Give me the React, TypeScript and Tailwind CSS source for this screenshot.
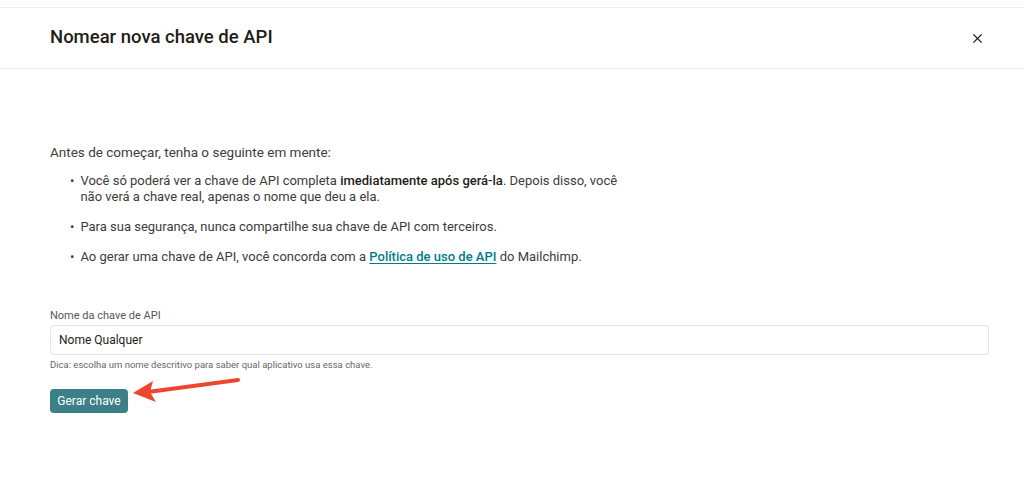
import React, { useState } from 'react';

const bullets = [
  <>
    Você só poderá ver a chave de API completa <strong className="font-medium text-[#241c15]">imediatamente após gerá-la</strong>. Depois disso, você não verá a chave real, apenas o nome que deu a ela.
  </>,
  <>Para sua segurança, nunca compartilhe sua chave de API com terceiros.</>,
  <>
    Ao gerar uma chave de API, você concorda com a{' '}
    <a href="#" className="font-medium text-[#007c89] underline underline-offset-2">Política de uso de API</a> do Mailchimp.
  </>,
];

export default function App() {
  const [name, setName] = useState('Nome Qualquer');

  return (
    <div className="h-[490px] bg-white font-['Roboto',sans-serif] text-[#403b3b]">
      <div className="h-2 border-b border-[#eef0f0]" />

      {/* header */}
      <div className="flex h-[61px] items-center justify-between border-b border-[#eceeee] pl-[50px] pr-[41px]">
        <h1 className="text-[18.5px] font-medium text-[#241c15]">Nomear nova chave de API</h1>
        <button className="text-[#241c15]">
          <svg width="11" height="11" viewBox="0 0 12 12" stroke="currentColor" strokeWidth="1.5">
            <path d="M1.5 1.5l9 9M10.5 1.5l-9 9" />
          </svg>
        </button>
      </div>

      <div className="px-[50px] pt-[73px]">
        <p className="text-[13.5px] leading-5">Antes de começar, tenha o seguinte em mente:</p>
        <ul className="mt-[11px] flex w-[570px] flex-col gap-[14px] pl-[20px]">
          {bullets.map((b, i) => (
            <li key={i} className="flex gap-[6px] text-[13px] leading-4">
              <span className="leading-4">•</span>
              <span>{b}</span>
            </li>
          ))}
        </ul>

        <div className="mt-[43px] w-[939px]">
          <label className="block text-[11px] leading-4 text-[#595454]">Nome da chave de API</label>
          <input
            value={name}
            onChange={(e) => setName(e.target.value)}
            className="mt-[1px] h-[30px] w-full rounded-[4px] border border-[#e2e4e6] px-2 text-[12px] text-[#241c15] outline-none"
          />
          <p className="mt-[4px] text-[9.5px] leading-3 text-[#6b6666]">
            Dica: escolha um nome descritivo para saber qual aplicativo usa essa chave.
          </p>
        </div>

        <div className="relative mt-[17px] w-fit">
          <button className="h-[24px] w-[78px] rounded-[4px] bg-[#3b7f89] text-[12px] text-white">Gerar chave</button>
          <svg className="pointer-events-none absolute left-[80px] top-[-13px]" width="112" height="32" viewBox="0 0 112 32">
            <path d="M108 5L18 17" stroke="#ee4530" strokeWidth="4" strokeLinecap="round" />
            <path d="M3 18L23 6L20 17L26 27Z" fill="#ee4530" />
          </svg>
        </div>
      </div>
    </div>
  );
}
